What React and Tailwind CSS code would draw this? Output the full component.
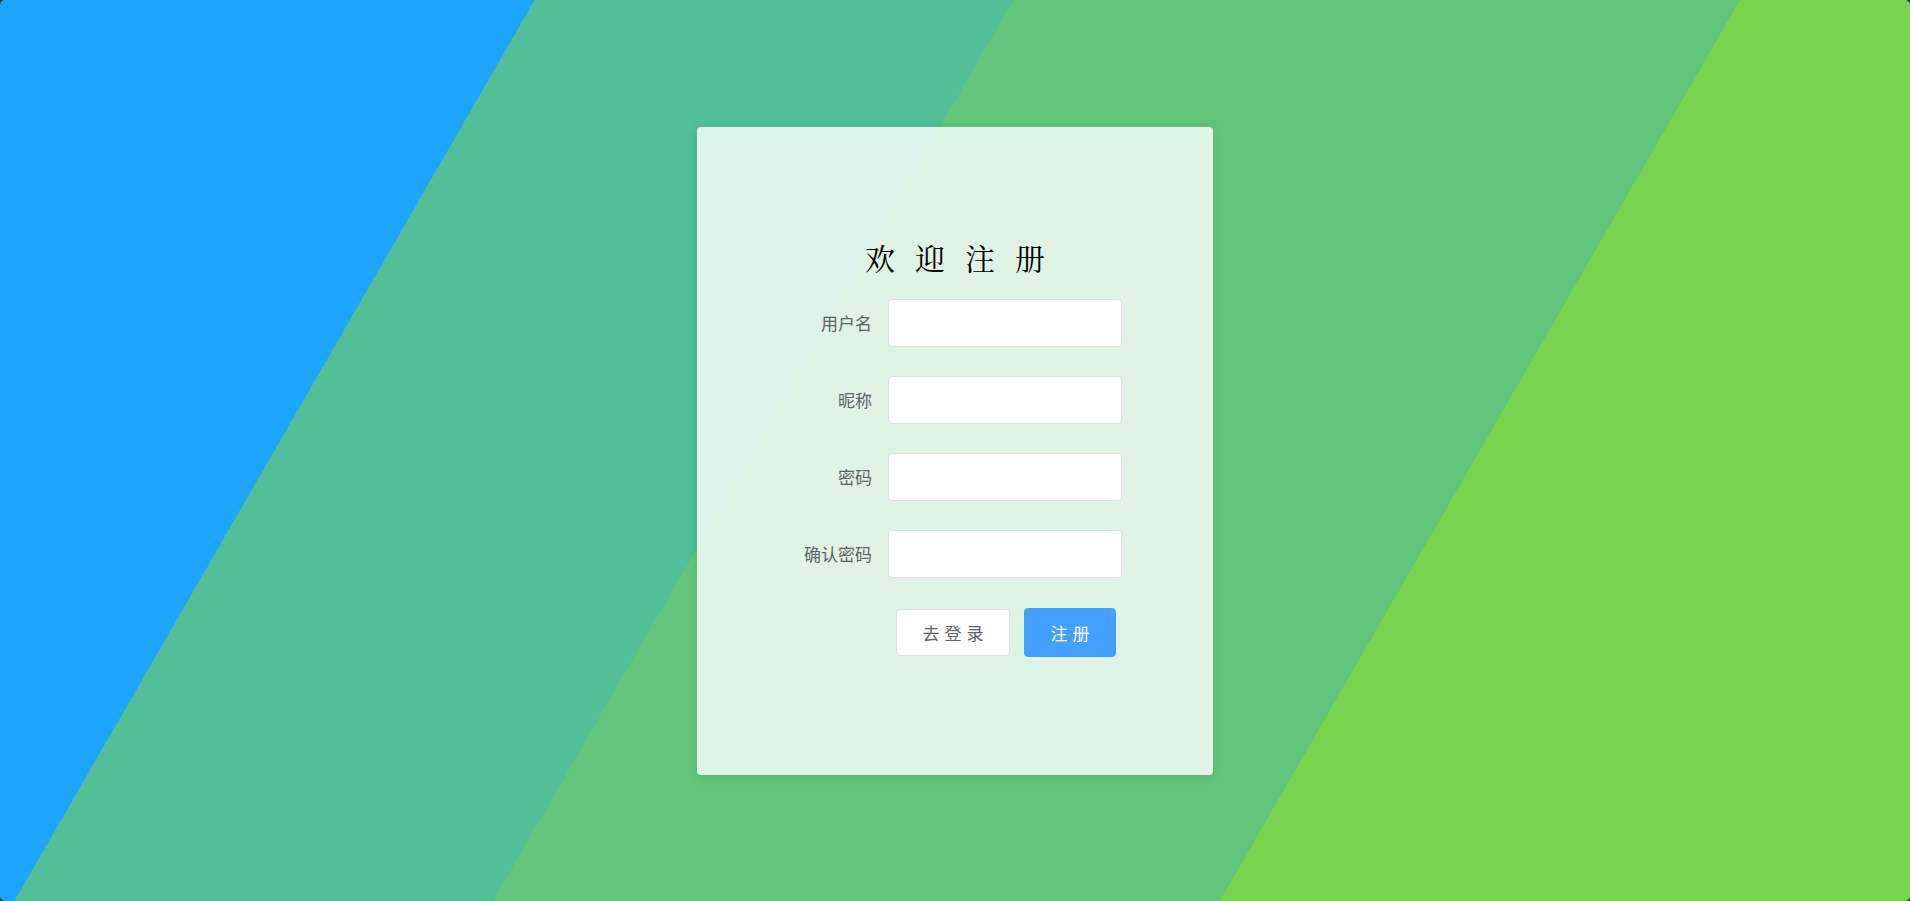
export default function App() {
  const fields = ["用户名", "昵称", "密码", "确认密码"];
  return (
    <div className="w-[1910px] h-[901px] bg-[#2b2b2b] overflow-hidden">
      <div
        className="w-full h-full rounded-[5px] flex items-center justify-center bg-[linear-gradient(120deg,#1ea6ff_22%,#52bf97_22%,#52bf97_41.7%,#61c67c_41.7%,#61c67c_71.6%,#78d44c_71.6%)]"
      >
        <div className="w-[516px] h-[648px] rounded-[4px] bg-white/80 shadow-[0_2px_12px_rgba(0,0,0,0.12)] flex flex-col pt-[115px] font-['Noto_Sans_CJK_SC',sans-serif]">
          <h1 className="text-center text-[30px] leading-[30px] text-black tracking-[20px] pl-[20px] font-normal font-['Noto_Serif_CJK_SC','Noto_Sans_CJK_SC',serif]">
            欢迎注册
          </h1>
          <div className="mt-[27px] pl-[55px] flex flex-col gap-[29px]">
            {fields.map((f) => (
              <div key={f} className="flex items-center h-[48px]">
                <label className="w-[136px] pr-[16px] text-right text-[17px] text-[#606266] leading-none">
                  {f}
                </label>
                <input
                  type={f.includes("密码") ? "password" : "text"}
                  className="w-[234px] h-[48px] bg-white border border-[#dcdfe6] rounded-[4px] px-[14px] text-[17px] outline-none"
                />
              </div>
            ))}
          </div>
          <div className="mt-[30px] pl-[199px] flex items-center gap-[14px]">
            <button className="h-[47px] w-[114px] bg-white border border-[#dcdfe6] rounded-[4px] text-[17px] text-[#606266] tracking-[5px] pl-[5px] leading-none">
              去登录
            </button>
            <button className="h-[49px] w-[92px] bg-[#43a0ff] border border-[#43a0ff] rounded-[4px] text-[17px] text-white tracking-[5px] pl-[5px] leading-none">
              注册
            </button>
          </div>
        </div>
      </div>
    </div>
  );
}
